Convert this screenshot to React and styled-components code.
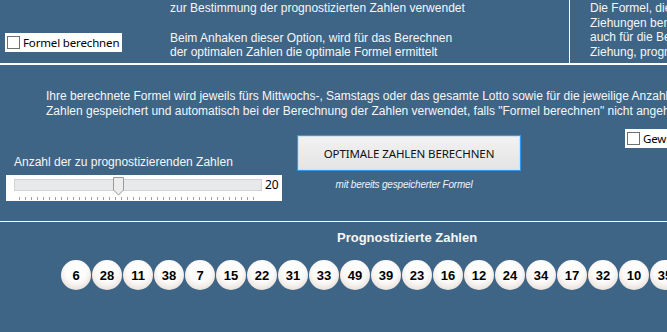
import React from "react";
import styled, { createGlobalStyle } from "styled-components";

const Global = createGlobalStyle`
  html, body { margin: 0; padding: 0; background: #3f6586; }
  #root { width: 667px; height: 332px; }
`;

const Page = styled.div`
  width: 667px;
  height: 332px;
  overflow: hidden;
  background: #3f6586;
  font-family: "Liberation Sans", Arial, sans-serif;
  color: #f4f6f8;
`;

const Top = styled.div`
  display: flex;
  height: 63px;
  border-bottom: 2px solid #ffffff;
`;

const LeftCell = styled.div`
  width: 155px;
  flex: none;
  padding: 33px 0 0 5px;
`;

const MidCell = styled.div`
  width: 399px;
  flex: none;
  padding: 1px 0 0 10px;
  border-right: 1px solid #ffffff;
`;

const RightCell = styled.div`
  flex: 1;
  padding: 1px 0 0 20px;
  white-space: nowrap;
  overflow: hidden;
`;

const TextBlock = styled.div`
  font-size: 12px;
  line-height: ${(p) => p.$lh || 14}px;
  white-space: nowrap;
  margin-top: ${(p) => p.$mt || 0}px;
`;

const CheckLabel = styled.label`
  display: flex;
  align-items: center;
  gap: 3px;
  background: #ffffff;
  height: 19px;
  width: ${(p) => p.$w}px;
  padding-left: 2px;
  box-sizing: border-box;
  font-family: "Noto Sans", "Open Sans", sans-serif;
  font-size: 11.5px;
  letter-spacing: -0.15px;
  color: #000;
  white-space: nowrap;
  overflow: hidden;
  margin-top: ${(p) => p.$mt || 0}px;
  margin-left: ${(p) => p.$ml || 0}px;
  flex: none;
`;

const Box = styled.span`
  width: 11px;
  height: 11px;
  border: 1px solid #707070;
  background: #fff;
  flex: none;
`;

const Middle = styled.div`
  height: 157px;
  border-bottom: 1px solid #ffffff;
  padding-top: 24px;
  box-sizing: border-box;
  overflow: hidden;
`;

const Para = styled.div`
  padding-left: 46px;
  font-size: 12px;
  line-height: 15px;
  white-space: nowrap;
`;

const ControlsRow = styled.div`
  display: flex;
  align-items: flex-start;
  padding-left: 6px;
`;

const SliderGroup = styled.div`
  width: 276px;
  flex: none;
  margin-top: 36px;
`;

const SliderLabel = styled.div`
  font-size: 12px;
  line-height: 15px;
  padding-left: 8px;
  margin-bottom: 5px;
  white-space: nowrap;
`;

const SliderBox = styled.div`
  position: relative;
  background: #ffffff;
  height: 26px;
  display: flex;
  align-items: flex-start;
  padding: 4px 0 0 8px;
  box-sizing: border-box;
`;

const Track = styled.div`
  position: relative;
  width: 246px;
  height: 10px;
  background: #e7e9ea;
  border: 1px solid #d0d3d6;
  flex: none;
`;

const Thumb = styled.svg`
  position: absolute;
  left: 98px;
  top: -3px;
`;

const Ticks = styled.div`
  position: absolute;
  left: 13px;
  top: 22px;
  width: 240px;
  height: 3px;
  background: repeating-linear-gradient(
    to right,
    #a0a0a0 0,
    #a0a0a0 1px,
    transparent 1px,
    transparent 6px
  );
`;

const SliderValue = styled.span`
  font-family: "Noto Sans", "Open Sans", sans-serif;
  font-size: 12px;
  color: #000;
  line-height: 14px;
  margin-left: 3px;
  margin-top: -1px;
`;

const ButtonGroup = styled.div`
  display: flex;
  flex-direction: column;
  align-items: center;
  width: 224px;
  margin: 16px 0 0 15px;
  flex: none;
`;

const BigButton = styled.button`
  width: 224px;
  height: 36px;
  border: 1px solid #3296f2;
  box-shadow: inset 0 0 0 1px #c8e4fb;
  background: linear-gradient(#f2f2f2, #e4e4e4);
  font-family: "Noto Sans", "Open Sans", sans-serif;
  font-size: 11.5px;
  letter-spacing: -0.1px;
  color: #111;
  padding: 0;
  cursor: pointer;
`;

const Caption = styled.div`
  font-size: 10px;
  font-style: italic;
  margin-top: 8px;
  margin-right: 10px;
  color: #eef2f6;
  letter-spacing: -0.2px;
`;

const Bottom = styled.div`
  padding-top: 8px;
  overflow: hidden;
`;

const Title = styled.div`
  font-size: 13px;
  font-weight: bold;
  line-height: 15px;
  padding-left: 337px;
  white-space: nowrap;
`;

const Balls = styled.div`
  display: flex;
  gap: 1px;
  padding-left: 61px;
  margin-top: 15px;
`;

const Ball = styled.div`
  width: 30px;
  height: 30px;
  flex: none;
  border-radius: 50%;
  background: radial-gradient(
    circle at 50% 38%,
    #ffffff 0%,
    #fcfbfa 45%,
    #ece6e1 72%,
    #c9bdb3 92%,
    #a89c92 100%
  );
  display: flex;
  align-items: center;
  justify-content: center;
  padding-top: 1px;
  box-sizing: border-box;
  font-size: 13px;
  font-weight: bold;
  color: #000;
`;

const numbers = [6, 28, 11, 38, 7, 15, 22, 31, 33, 49, 39, 23, 16, 12, 24, 34, 17, 32, 10, 35];

export default function App() {
  return (
    <Page>
      <Global />
      <Top>
        <LeftCell>
          <CheckLabel $w={117}>
            <Box />
            Formel berechnen
          </CheckLabel>
        </LeftCell>
        <MidCell>
          <TextBlock>zur Bestimmung der prognostizierten Zahlen verwendet</TextBlock>
          <TextBlock $mt={16}>Beim Anhaken dieser Option, wird für das Berechnen</TextBlock>
          <TextBlock>der optimalen Zahlen die optimale Formel ermittelt</TextBlock>
        </MidCell>
        <RightCell>
          <TextBlock $lh={14.7}>Die Formel, die für die Berechnung der</TextBlock>
          <TextBlock $lh={14.7}>Ziehungen benutzt wurde, wird</TextBlock>
          <TextBlock $lh={14.7}>auch für die Berechnung der nächsten</TextBlock>
          <TextBlock $lh={14.7}>Ziehung, prognostiziert</TextBlock>
        </RightCell>
      </Top>
      <Middle>
        <Para>
          Ihre berechnete Formel wird jeweils fürs Mittwochs-, Samstags oder das gesamte Lotto sowie für die jeweilige Anzahl der
          <br />
          Zahlen gespeichert und automatisch bei der Berechnung der Zahlen verwendet, falls "Formel berechnen" nicht angehakt ist.
        </Para>
        <ControlsRow>
          <SliderGroup>
            <SliderLabel>Anzahl der zu prognostizierenden Zahlen</SliderLabel>
            <SliderBox>
              <Track>
                <Thumb width="11" height="19" viewBox="0 0 11 19">
                  <path d="M0.5 0.5 H10.5 V13 L5.5 18 L0.5 13 Z" fill="#ececec" stroke="#9a9a9a" />
                </Thumb>
              </Track>
              <SliderValue>20</SliderValue>
              <Ticks />
            </SliderBox>
          </SliderGroup>
          <ButtonGroup>
            <BigButton>OPTIMALE ZAHLEN BERECHNEN</BigButton>
            <Caption>mit bereits gespeicherter Formel</Caption>
          </ButtonGroup>
          <CheckLabel $w={60} $mt={10} $ml={104}>
            <Box />
            Gewinnzahlen
          </CheckLabel>
        </ControlsRow>
      </Middle>
      <Bottom>
        <Title>Prognostizierte Zahlen</Title>
        <Balls>
          {numbers.map((n, i) => (
            <Ball key={i}>{n}</Ball>
          ))}
        </Balls>
      </Bottom>
    </Page>
  );
}
